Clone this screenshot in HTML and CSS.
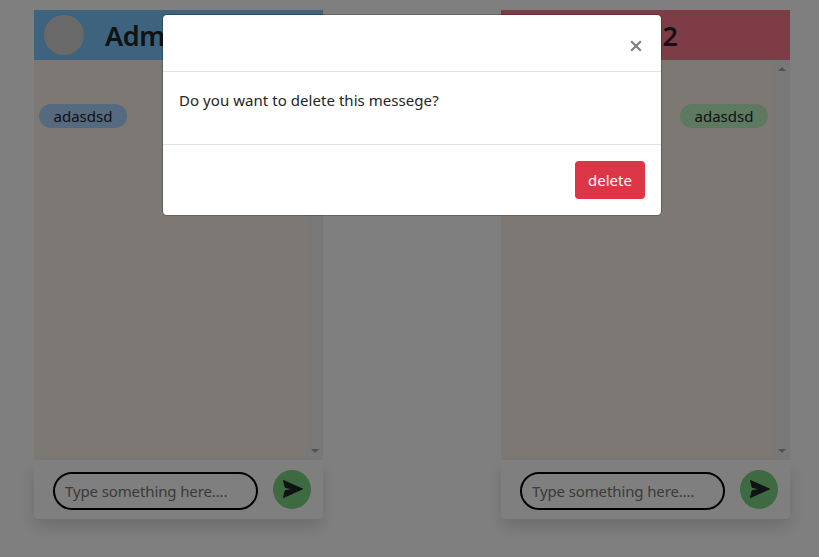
FILE: index.html
```html
<!DOCTYPE html>
<html lang="en">
<head>
<meta charset="utf-8">
<title>Chat</title>
<link rel="stylesheet" href="styles.css">
</head>
<body>
<main class="chats">
  <section class="chat">
    <header class="chat-header blue"><span class="avatar"></span><h2>Admin 1</h2></header>
    <div class="messages">
      <div class="message-list"><span class="bubble received">adasdsd</span></div>
      <div class="scrollbar"><i class="arrow up"></i><i class="arrow down"></i></div>
    </div>
    <form class="composer">
      <input type="text" placeholder="Type something here....">
      <button type="button" class="send" aria-label="Send"><svg viewBox="0 0 20 18"><path d="M.5.5 19.5 9 .5 17.5 2.2 10.6 11 9.2 2.2 7.4Z"/></svg></button>
    </form>
  </section>
  <section class="chat">
    <header class="chat-header pink"><span class="avatar"></span><h2>Admin 2</h2></header>
    <div class="messages">
      <div class="message-list"><span class="bubble sent">adasdsd</span></div>
      <div class="scrollbar"><i class="arrow up"></i><i class="arrow down"></i></div>
    </div>
    <form class="composer">
      <input type="text" placeholder="Type something here....">
      <button type="button" class="send" aria-label="Send"><svg viewBox="0 0 20 18"><path d="M.5.5 19.5 9 .5 17.5 2.2 10.6 11 9.2 2.2 7.4Z"/></svg></button>
    </form>
  </section>
</main>
<div class="backdrop">
  <div class="modal" role="dialog">
    <div class="modal-header"><button type="button" class="close" aria-label="Close"><svg viewBox="0 0 12 12"><path d="M1.2 1.2 10.8 10.8M10.8 1.2 1.2 10.8"/></svg></button></div>
    <div class="modal-body"><p>Do you want to delete this messege?</p></div>
    <div class="modal-footer"><button type="button" class="delete">delete</button></div>
  </div>
</div>
</body>
</html>
```
FILE: styles.css
```css
* { box-sizing: border-box; }
body {
  margin: 0;
  height: 557px;
  overflow: hidden;
  background: #fff;
  color: #212529;
  font: 15px/24px "Segoe UI", "Noto Sans", "Open Sans", sans-serif;
}
button, input { font: inherit; color: inherit; }
.chats { display: flex; gap: 178px; padding: 10px 0 0 34px; }
.chat { width: 289px; height: 509px; flex: none; }
.chat-header { display: flex; align-items: center; gap: 21px; height: 50px; padding-left: 10px; }
.blue { background: #7cc7fd; }
.pink { background: #fd788f; }
.avatar { width: 40px; height: 40px; border-radius: 50%; background: #d3d3d3; }
h2 { margin: 0; padding-top: 2px; font-size: 27px; line-height: 34px; font-weight: 600; letter-spacing: -.4px; white-space: nowrap; }
.messages { display: flex; height: 400px; background: #faf1e6; }
.message-list { display: flex; flex: 1; align-items: flex-start; padding: 44px 5px 0; }
.bubble { width: 88px; height: 24px; border-radius: 12px; text-align: center; }
.received { background: #aad4fd; }
.sent { margin-left: auto; background: #bbf3bf; }
.scrollbar {
  width: 17px;
  display: flex;
  flex-direction: column;
  justify-content: space-between;
  align-items: center;
  padding: 7px 0;
  background: #f1f1f1;
}
.arrow { border: 4px solid transparent; }
.up { border-top: 0; border-bottom-color: #a3a3a3; }
.down { border-bottom: 0; border-top-color: #a3a3a3; }
.composer {
  display: flex;
  align-items: flex-start;
  height: 59px;
  padding: 10px 12px 0 19px;
  background: #fff;
  border-radius: 0 0 4px 4px;
  box-shadow: 0 8px 16px rgba(0, 0, 0, .15);
}
.composer input {
  width: 205px;
  height: 38px;
  margin: 2px 15px 0 0;
  padding: 0 10px;
  border: 2px solid #000;
  border-radius: 19px;
  background: transparent;
  letter-spacing: -.12px;
}
.composer input::placeholder { color: #757575; opacity: 1; }
.send {
  width: 38px;
  height: 39px;
  display: flex;
  align-items: center;
  justify-content: center;
  padding: 0 0 1px 1px;
  border: 0;
  border-radius: 50%;
  background: #7ad482;
}
.send svg { width: 20px; height: 18px; fill: #212529; stroke: #212529; stroke-width: 1; stroke-linejoin: round; }
.backdrop { position: absolute; inset: 0; padding: 14px 0 0 162px; background: rgba(0, 0, 0, .5); }
.modal {
  width: 500px;
  height: 202px;
  border: 1px solid rgba(0, 0, 0, .2);
  border-radius: 5px;
  background: #fff;
  background-clip: padding-box;
}
.modal-header { display: flex; justify-content: flex-end; height: 57px; padding: 25px 19px 0 0; border-bottom: 1px solid #dee2e6; }
.close { width: 12px; height: 12px; padding: 0; border: 0; background: none; }
.close svg { display: block; width: 12px; height: 12px; stroke: #7f7f7f; stroke-width: 2.2; }
.modal-body { height: 72px; padding: 16px; }
.modal-body p { margin: 0; letter-spacing: .05px; }
.modal-footer { display: flex; justify-content: flex-end; padding: 16px 16px 0; border-top: 1px solid #dee2e6; }
.delete { width: 70px; height: 38px; padding: 0; border: 0; border-radius: 4px; background: #dc3545; color: #fff; }
```
